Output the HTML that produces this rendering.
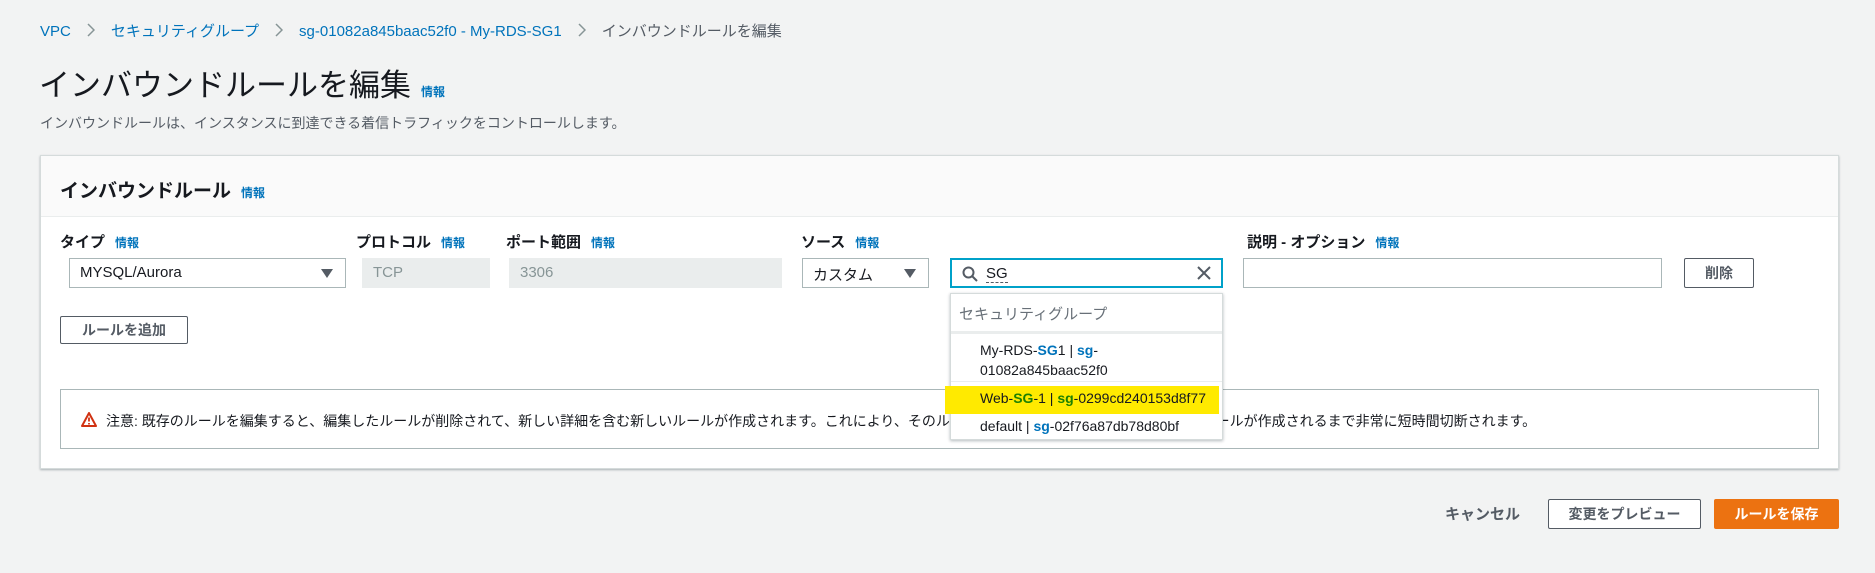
<!DOCTYPE html>
<html><head><meta charset="utf-8"><style>
*{box-sizing:border-box;margin:0;padding:0}
body{width:1875px;height:573px;background:#f2f3f3;font-family:"Liberation Sans","Noto Sans CJK JP",sans-serif;color:#16191f;position:relative;overflow:hidden;font-size:15px}
.a{position:absolute;white-space:nowrap}
.link{color:#0073bb}
.info{color:#0073bb;font-size:12px;font-weight:bold;margin-left:10px}
.crumb{top:20px;left:40px;font-size:15px;color:#545b64}
.crumb .sep{display:inline-block;width:40px;text-align:center;vertical-align:middle}
.panel{left:40px;top:155px;width:1799px;height:314px;background:#fff;border:1px solid #d5dbdb;box-shadow:0 1px 2px rgba(0,28,36,.3)}
.hdr{position:absolute;left:0;top:0;right:0;height:61px;background:#fafafa;border-bottom:1px solid #eaeded}
.lbl{top:231px;font-size:15px;font-weight:bold}
.box{position:absolute;top:258px;height:30px;border:1px solid #aab7b8;background:#fff;font-size:15px;padding:5px 10px;white-space:nowrap}
.dis{background:#eaeded;border-color:#eaeded;color:#879596}
.tri{position:absolute;right:12px;top:10px;width:0;height:0;border-left:6px solid transparent;border-right:6px solid transparent;border-top:9px solid #545b64}
.btn{position:absolute;border:1px solid #545b64;background:#fff;font-weight:bold;font-size:14px;text-align:center;color:#545b64;border-radius:2px}
.b{color:#0073bb;font-weight:bold}
</style></head><body>
<div class="a crumb"><span class="link">VPC</span><span class="sep"><svg width="8" height="14" viewBox="0 0 8 14"><path d="M1 1l6 6-6 6" fill="none" stroke="#879596" stroke-width="1.5"/></svg></span><span class="link">セキュリティグループ</span><span class="sep"><svg width="8" height="14" viewBox="0 0 8 14"><path d="M1 1l6 6-6 6" fill="none" stroke="#879596" stroke-width="1.5"/></svg></span><span class="link">sg-01082a845baac52f0 - My-RDS-SG1</span><span class="sep"><svg width="8" height="14" viewBox="0 0 8 14"><path d="M1 1l6 6-6 6" fill="none" stroke="#879596" stroke-width="1.5"/></svg></span>インバウンドルールを編集</div>
<div class="a" style="left:39px;top:60px;font-size:31px;">インバウンドルールを編集<span class="info" style="font-size:12px">情報</span></div>
<div class="a" style="left:40px;top:113px;font-size:14px;color:#545b64">インバウンドルールは、インスタンスに到達できる着信トラフィックをコントロールします。</div>
<div class="a panel"><div class="hdr"><div class="a" style="left:19px;top:20px;font-size:19px;font-weight:bold">インバウンドルール<span class="info">情報</span></div></div></div>
<div class="a lbl" style="left:60px">タイプ<span class="info">情報</span></div>
<div class="a lbl" style="left:356px">プロトコル<span class="info">情報</span></div>
<div class="a lbl" style="left:506px">ポート範囲<span class="info">情報</span></div>
<div class="a lbl" style="left:801px">ソース<span class="info">情報</span></div>
<div class="a lbl" style="left:1247px">説明 - オプション<span class="info">情報</span></div>
<div class="box" style="left:69px;width:277px">MYSQL/Aurora<span class="tri"></span></div>
<div class="box dis" style="left:362px;width:128px">TCP</div>
<div class="box dis" style="left:509px;width:273px">3306</div>
<div class="box" style="left:802px;width:127px">カスタム<span class="tri"></span></div>
<div class="box" style="left:950px;width:273px;border:2px solid #00a1c9;padding-left:34px">
<svg style="position:absolute;left:10px;top:6px" width="16" height="16" viewBox="0 0 16 16"><circle cx="6.5" cy="6.5" r="5" fill="none" stroke="#545b64" stroke-width="2"/><path d="M10 10l5 5" stroke="#545b64" stroke-width="2"/></svg>
<span style="border-bottom:1px dashed #545b64">SG</span>
<svg style="position:absolute;right:10px;top:6px" width="14" height="14" viewBox="0 0 14 14"><path d="M1 1l12 12M13 1L1 13" stroke="#545b64" stroke-width="2"/></svg></div>
<div class="box" style="left:1243px;width:419px"></div>
<div class="btn" style="left:1684px;top:258px;width:70px;height:30px;line-height:28px;color:#545b64">削除</div>
<div class="btn" style="left:60px;top:316px;width:128px;height:28px;line-height:26px;color:#545b64">ルールを追加</div>
<div class="a" style="left:60px;top:389px;width:1759px;height:60px;border:1px solid #aab7b8;background:#fff"></div>
<svg class="a" style="left:81px;top:412px" width="16" height="15" viewBox="0 0 16 15"><path d="M8 1L15 14H1Z" fill="none" stroke="#d13212" stroke-width="2" stroke-linejoin="round"/><path d="M8 5.5v4M8 11v1.5" stroke="#d13212" stroke-width="1.8"/></svg>
<div class="a" style="left:106px;top:411px;font-size:14px;color:#16191f">注意: 既存のルールを編集すると、編集したルールが削除されて、新しい詳細を含む新しいルールが作成されます。これにより、そのルールに依存するトラフィックは、新しいルールが作成されるまで非常に短時間切断されます。</div>
<div class="a" style="left:950px;top:293px;width:273px;height:147px;background:#fff;border:1px solid #d5dbdb;box-shadow:0 1px 3px rgba(0,28,36,.3);font-size:14px">
<div class="a" style="left:8px;top:9px;font-size:15px;color:#687078">セキュリティグループ</div>
<div class="a" style="left:0;right:0;top:37px;height:3px;background:#eaeded"></div>
<div class="a" style="left:29px;top:46px;line-height:20px">My-RDS-<span class="b">SG</span>1 | <span class="b">sg</span>-<br>01082a845baac52f0</div>
<div class="a" style="left:0;right:0;top:87px;height:1px;background:#eaeded"></div>
<div class="a" style="left:-6px;right:3px;top:92px;height:28px;background:#ffea00"></div>
<div class="a" style="left:29px;top:96px"><span>Web-</span><span style="font-weight:bold;color:#1d8102">SG</span>-1 | <span style="font-weight:bold;color:#1d8102">sg</span>-0299cd240153d8f77</div>
<div class="a" style="left:29px;top:124px">default | <span class="b">sg</span>-02f76a87db78d80bf</div>
</div>
<div class="a" style="left:1445px;top:503px;font-size:15px;font-weight:bold;color:#545b64">キャンセル</div>
<div class="btn" style="left:1548px;top:499px;width:153px;height:30px;line-height:28px">変更をプレビュー</div>
<div class="a" style="left:1714px;top:499px;width:125px;height:30px;line-height:30px;background:#ec7211;color:#fff;font-weight:bold;font-size:14px;text-align:center;border-radius:2px">ルールを保存</div>
</body></html>
